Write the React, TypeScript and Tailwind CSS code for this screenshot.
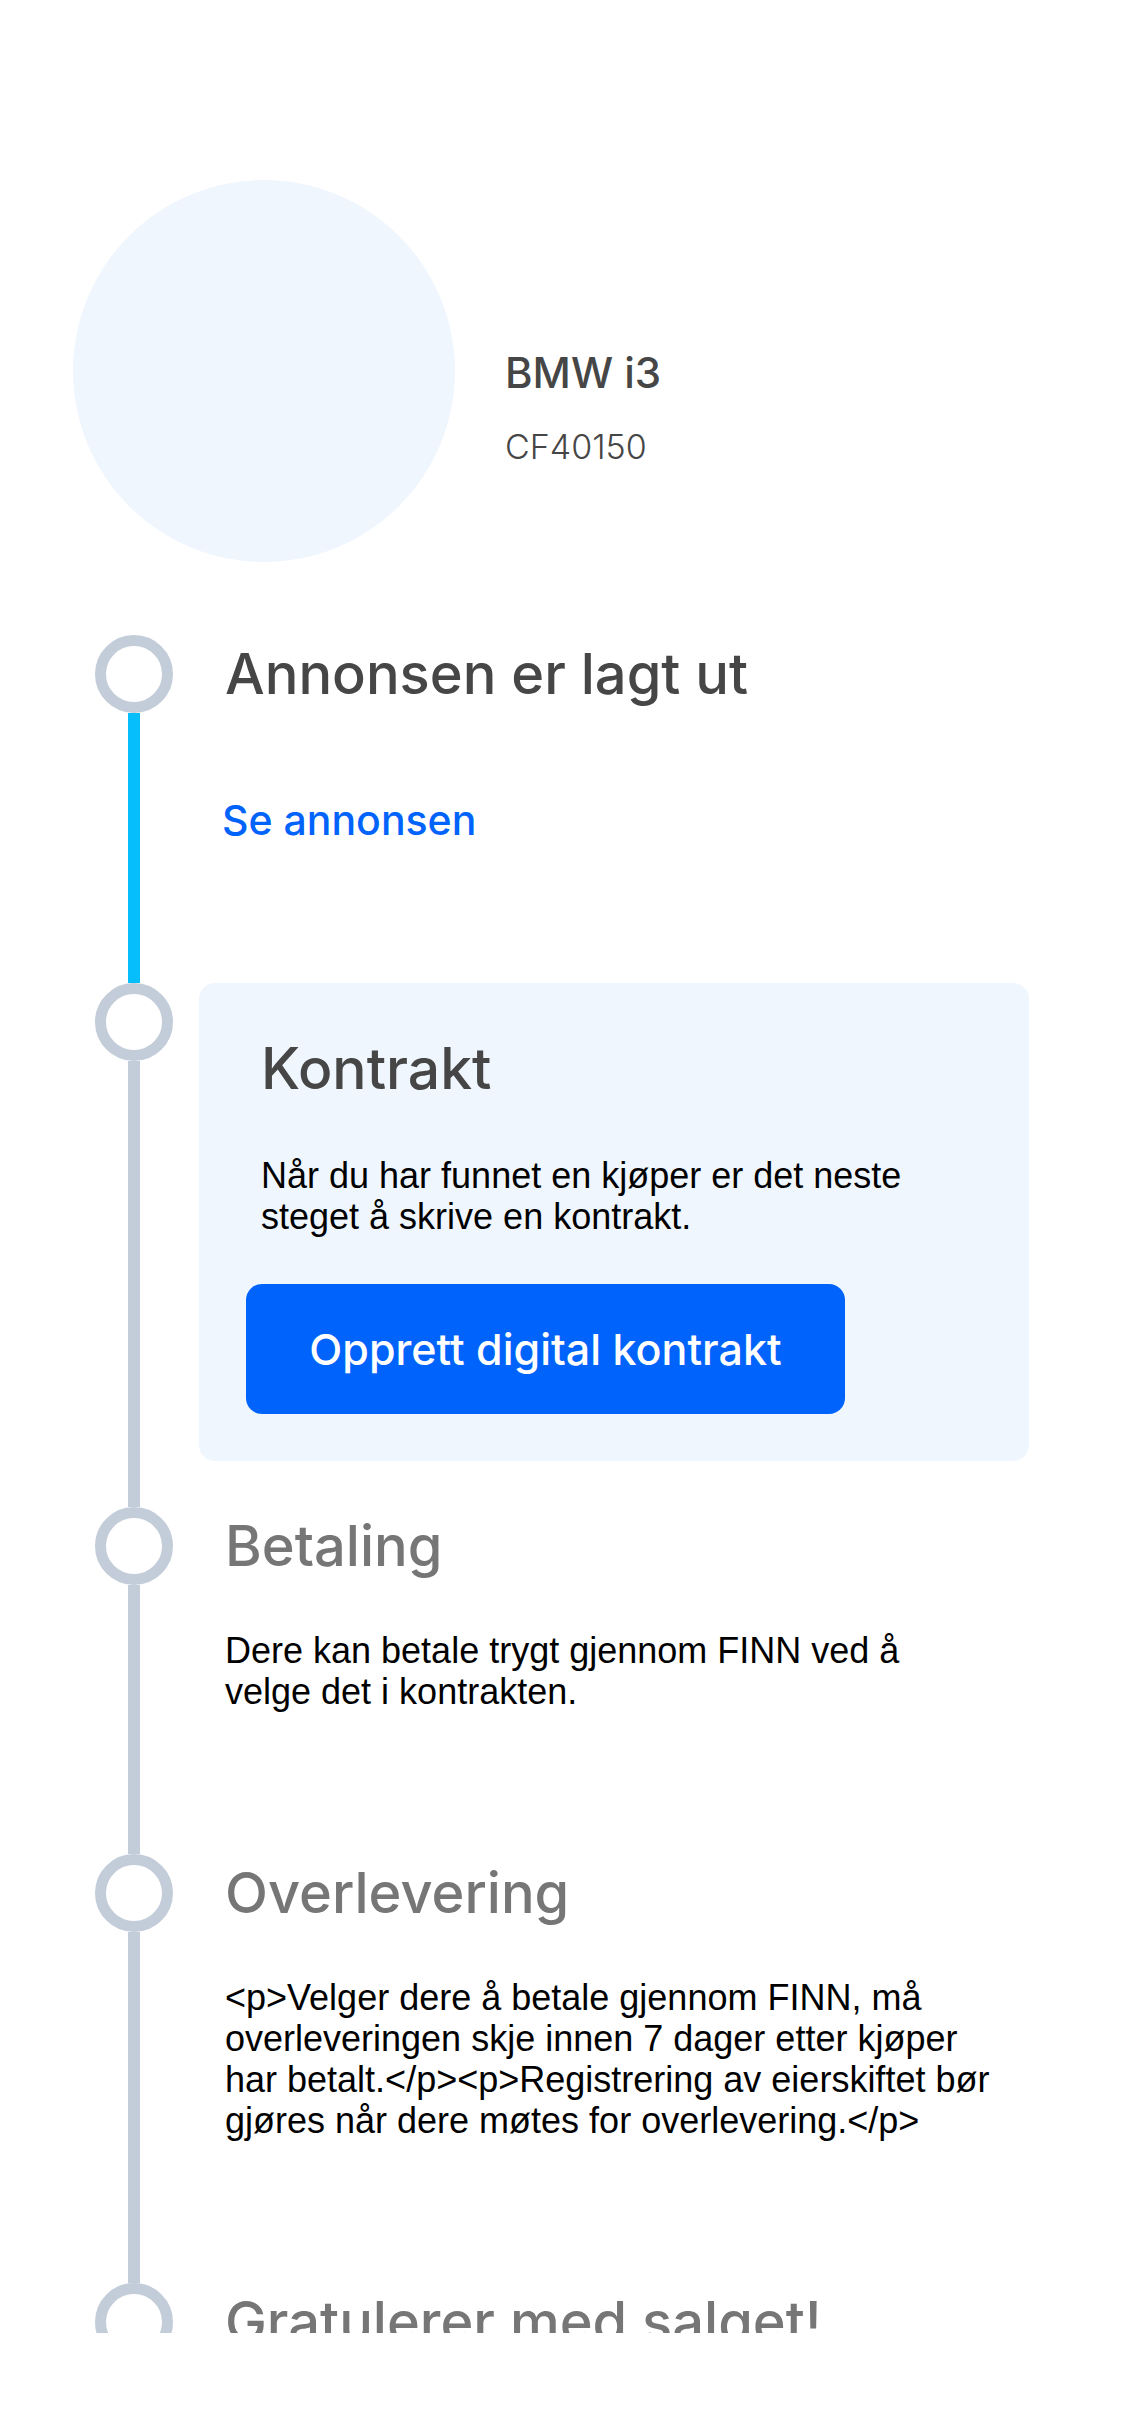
const heading = "font-['Inter','Noto_Sans',sans-serif]";
const body = "font-['Liberation_Sans','Arial',sans-serif]";

type Step = {
  title: string;
  active?: boolean;
  lineColor: string;
  content?: React.ReactNode;
  boxed?: boolean;
  pb: string;
};

function Ring() {
  return <div className="h-[78px] w-[78px] shrink-0 rounded-full border-[11px] border-[#c3ccd9] bg-white" />;
}

function Paragraph({ children }: { children: React.ReactNode }) {
  return <p className={`${body} mt-[45px] max-w-[765px] text-[36px] leading-[41px] text-black`}>{children}</p>;
}

export default function App() {
  const steps: Step[] = [
    {
      title: "Annonsen er lagt ut",
      active: true,
      lineColor: "bg-[#06befb]",
      pb: "pb-[139px]",
      content: (
        <a className={`${heading} -ml-[3px] mt-[83px] block text-[41px] font-medium leading-[48px] text-[#0063fb]`} href="#">
          Se annonsen
        </a>
      ),
    },
    {
      title: "Kontrakt",
      active: true,
      boxed: true,
      lineColor: "bg-[#c3ccd9]",
      pb: "pb-[46px]",
    },
    {
      title: "Betaling",
      lineColor: "bg-[#c3ccd9]",
      pb: "pb-[142px]",
      content: <Paragraph>Dere kan betale trygt gjennom FINN ved å velge det i kontrakten.</Paragraph>,
    },
    {
      title: "Overlevering",
      lineColor: "bg-[#c3ccd9]",
      pb: "pb-[142px]",
      content: (
        <Paragraph>
          {"<p>Velger dere å betale gjennom FINN, må overleveringen skje innen 7 dager etter kjøper har betalt.</p><p>Registrering av eierskiftet bør gjøres når dere møtes for overlevering.</p>"}
        </Paragraph>
      ),
    },
    {
      title: "Gratulerer med salget!",
      lineColor: "bg-transparent",
      pb: "pb-[100px]",
    },
  ];

  return (
    <div className="min-h-[2436px] w-full bg-white">
      <div className="h-[2333px] overflow-hidden">
        {/* car header */}
        <div className="flex items-start pl-[73px] pt-[180px]">
          <div className="h-[382px] w-[382px] shrink-0 rounded-full bg-[#eff6fd]" />
          <div className="ml-[50px] mt-[168px] flex flex-col">
            <span className={`${heading} text-[42px] font-medium leading-[50px] text-[#464646]`}>BMW i3</span>
            <span className={`${heading} mt-[29px] text-[34px] font-light leading-[40px] text-[#464646]`}>CF40150</span>
          </div>
        </div>

        {/* timeline */}
        <div className="mt-[73px] pl-[95px] pr-[96px]">
          {steps.map((step) => (
            <div key={step.title} className="flex">
              <div className="flex w-[78px] shrink-0 flex-col items-center">
                <Ring />
                <div className={`w-[12px] flex-1 ${step.lineColor}`} />
              </div>
              <div className={`ml-[52px] min-w-0 flex-1 ${step.pb}`}>
                {step.boxed ? (
                  <div className="-ml-[26px] rounded-[16px] bg-[#eff6fd] px-[47px] pb-[47px] pt-[47px]">
                    <h2 className={`${heading} pl-[15px] text-[57px] font-medium leading-[78px] text-[#464646]`}>Kontrakt</h2>
                    <p className={`${body} mt-[47px] max-w-[720px] pl-[15px] text-[36px] leading-[41px] text-black`}>
                      Når du har funnet en kjøper er det neste steget å skrive en kontrakt.
                    </p>
                    <button className={`${heading} mt-[47px] h-[130px] w-[599px] rounded-[16px] bg-[#0063fb] text-[43px] font-medium text-white`}>
                      Opprett digital kontrakt
                    </button>
                  </div>
                ) : (
                  <>
                    <h2
                      className={`${heading} h-[78px] whitespace-nowrap text-[56px] font-medium leading-[78px] ${
                        step.active ? "text-[#464646]" : "text-[#767676]"
                      }`}
                    >
                      {step.title}
                    </h2>
                    {step.content}
                  </>
                )}
              </div>
            </div>
          ))}
        </div>
      </div>
    </div>
  );
}
